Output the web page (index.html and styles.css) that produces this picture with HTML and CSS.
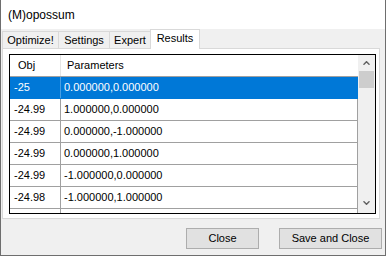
FILE: index.html
```html
<!DOCTYPE html>
<html>
<head>
<meta charset="utf-8">
<link rel="stylesheet" href="styles.css">
</head>
<body>
<div class="window">
  <div class="titlebar">(M)opossum</div>
  <div class="client">
    <div class="tabs">
      <div class="tab t-opt">Optimize!</div>
      <div class="tab t-set">Settings</div>
      <div class="tab t-exp">Expert</div>
      <div class="tab t-res active">Results</div>
    </div>
    <div class="panel">
      <div class="list">
        <div class="grid">
          <div class="row header"><div class="cell obj">Obj</div><div class="cell par">Parameters</div></div>
          <div class="row sel"><div class="cell obj">-25</div><div class="cell par">0.000000,0.000000</div></div>
          <div class="row"><div class="cell obj">-24.99</div><div class="cell par">1.000000,0.000000</div></div>
          <div class="row"><div class="cell obj">-24.99</div><div class="cell par">0.000000,-1.000000</div></div>
          <div class="row"><div class="cell obj">-24.99</div><div class="cell par">0.000000,1.000000</div></div>
          <div class="row"><div class="cell obj">-24.99</div><div class="cell par">-1.000000,0.000000</div></div>
          <div class="row"><div class="cell obj">-24.98</div><div class="cell par">-1.000000,1.000000</div></div>
          <div class="row"><div class="cell obj"></div><div class="cell par"></div></div>
        </div>
        <div class="vscroll">
          <div class="arrow"><svg width="7" height="4" viewBox="0 0 7 4"><polyline points="0.5,3.7 3.5,0.7 6.5,3.7" fill="none" stroke="#606060" stroke-width="1.4"/></svg></div>
          <div class="thumb"></div>
          <div class="spacer"></div>
          <div class="arrow down"><svg width="7" height="4" viewBox="0 0 7 4"><polyline points="0.5,0.3 3.5,3.3 6.5,0.3" fill="none" stroke="#606060" stroke-width="1.4"/></svg></div>
        </div>
      </div>
    </div>
    <div class="buttons">
      <button class="btn b-close">Close</button>
      <button class="btn b-save">Save and Close</button>
    </div>
  </div>
</div>
</body>
</html>
```

FILE: styles.css
```css
* { box-sizing: border-box; }
body {
  margin: 0;
  background: #fff;
  font-family: "Liberation Sans", Arial, sans-serif;
  color: #000;
}
.window {
  width: 386px;
  height: 256px;
  border-left: 1px solid #6e6e6e;
  border-right: 1px solid #6e6e6e;
  border-bottom: 1px solid #6e6e6e;
  background: #f0f0f0;
  display: flex;
  flex-direction: column;
}
.titlebar {
  height: 29px;
  flex: none;
  background: #fff;
  padding-left: 7px;
  font-size: 12px;
  line-height: 31px;
  white-space: nowrap;
}
.client {
  flex: 1;
  display: flex;
  flex-direction: column;
  padding-left: 1px;
}
.tabs {
  display: flex;
  align-items: flex-end;
  height: 19px;
  flex: none;
}
.tab {
  height: 17px;
  border: 1px solid #d9d9d9;
  border-bottom: none;
  background: #f0f0f0;
  font-size: 11px;
  line-height: 16px;
  text-align: center;
  margin-left: -1px;
  white-space: nowrap;
}
.tab:first-child { margin-left: 0; }
.t-opt { width: 57px; }
.t-set { width: 52px; }
.t-exp { width: 42px; }
.t-res { width: 50px; }
.tab.active {
  height: 20px;
  background: #fff;
  margin-bottom: -1px;
  position: relative;
  z-index: 1;
}
.panel {
  width: 378px;
  height: 171px;
  flex: none;
  border: 1px solid #d9d9d9;
  background: #fff;
  padding: 5px 0 0 6px;
}
.list {
  width: 367px;
  height: 160px;
  border: 1px solid #000;
  display: flex;
  overflow: hidden;
}
.grid {
  width: 348px;
  flex: none;
  overflow: hidden;
}
.row {
  display: flex;
  height: 22px;
  flex: none;
  border-bottom: 1px solid #a0a0a0;
  font-size: 11px;
  line-height: 21px;
  white-space: nowrap;
}
.cell { overflow: hidden; }
.obj {
  width: 51px;
  border-right: 1px solid #a0a0a0;
  padding-left: 4px;
}
.par {
  width: 297px;
  border-right: 1px solid #a0a0a0;
  padding-left: 3px;
}
.header .obj {
  border-right-color: #e5e5e5;
  padding-left: 8px;
}
.header .par {
  border-right-color: transparent;
  padding-left: 6px;
}
.row.sel {
  background: #0078d7;
  color: #fff;
  border-bottom-color: #0078d7;
}
.row.sel .obj { border-right-color: #4a9fe3; }
.row.sel .par { border-right-color: #0078d7; }
.vscroll {
  width: 17px;
  flex: none;
  background: #f0f0f0;
  display: flex;
  flex-direction: column;
}
.arrow {
  height: 16px;
  display: flex;
  align-items: center;
  justify-content: center;
}
.arrow svg { display: block; }
.arrow.down { height: 18px; padding-bottom: 2px; }
.thumb {
  height: 17px;
  margin: 0 1px;
  background: #cdcdcd;
}
.spacer { flex: 1; }
.buttons {
  display: flex;
  justify-content: flex-end;
  gap: 20px;
  margin-top: 9px;
  padding-right: 3px;
}
.btn {
  height: 21px;
  border: 1px solid #adadad;
  background: #e1e1e1;
  font-family: "Liberation Sans", Arial, sans-serif;
  font-size: 11px;
  line-height: 19px;
  color: #000;
  padding: 0;
  text-align: center;
  border-radius: 0;
}
.b-close { width: 73px; }
.b-save { width: 103px; }
```
